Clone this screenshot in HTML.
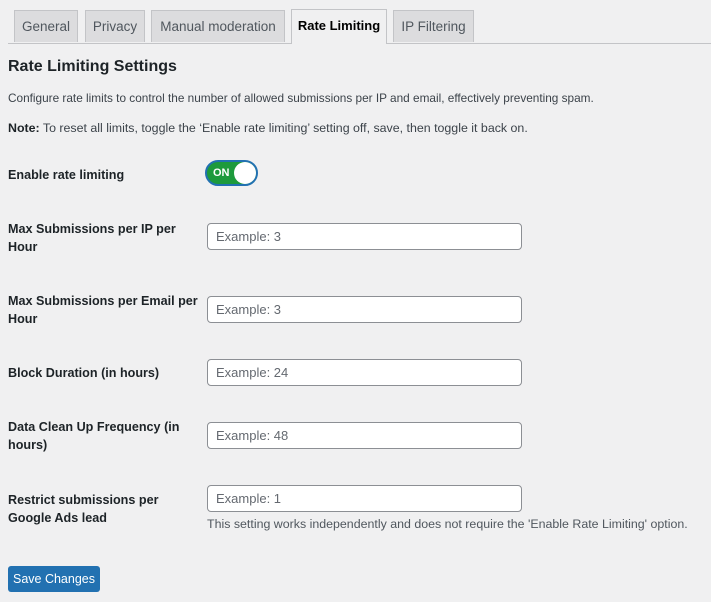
<!DOCTYPE html><html><head><style>
body{margin:0;background:#f0f0f1;font-family:"Liberation Sans",sans-serif;color:#1d2327;width:711px;height:602px;overflow:hidden;position:relative;font-size:13px}
.a{position:absolute}
.tab{position:absolute;top:10px;height:32px;border:1px solid #c3c4c7;border-bottom:none;background:#dcdcde;color:#50575e;font-size:13.5px;line-height:32px;text-align:center;box-sizing:border-box}
.tab.on{background:#f0f0f1;color:#000;top:9px;height:35px;font-weight:bold;font-size:13px}
.line{position:absolute;left:8px;right:0;top:43px;border-top:1px solid #c3c4c7}
.lab{position:absolute;left:8px;font-weight:bold;font-size:12.6px;line-height:18px;width:200px;white-space:nowrap}
.in{position:absolute;left:207px;width:315px;height:27px;box-sizing:border-box;border:1px solid #8c8f94;border-radius:4px;background:#fff;color:#646970;font-size:13px;line-height:25px;padding-left:8px}
</style></head><body>
<div class="line"></div>
<div class="tab" style="left:14px;width:64px">General</div>
<div class="tab" style="left:85px;width:60px">Privacy</div>
<div class="tab" style="left:151px;width:134px">Manual moderation</div>
<div class="tab on" style="left:291px;width:96px">Rate Limiting</div>
<div class="tab" style="left:393px;width:81px">IP Filtering</div>
<div class="a" style="left:8px;top:58px;font-size:16px;font-weight:bold">Rate Limiting Settings</div>
<div class="a" style="left:8px;top:91px;font-size:11.8px;color:#3c434a">Configure rate limits to control the number of allowed submissions per IP and email, effectively preventing spam.</div>
<div class="a" style="left:8px;top:121px;font-size:12.4px;color:#3c434a"><b style="color:#1d2327">Note:</b> To reset all limits, toggle the ‘Enable rate limiting’ setting off, save, then toggle it back on.</div>
<div class="lab" style="top:166px">Enable rate limiting</div>
<div class="a" style="left:205px;top:160px;width:53px;height:26px;border-radius:14px;background:#1d9a3c;box-sizing:border-box;border:2px solid #2271b1"></div>
<div class="a" style="left:213px;top:167px;color:#fff;font-weight:bold;font-size:11px">ON</div>
<div class="a" style="left:234px;top:162px;width:22px;height:22px;border-radius:50%;background:#fff"></div>
<div class="lab" style="top:220px">Max Submissions per IP per<br>Hour</div>
<div class="in" style="top:223px">Example: 3</div>
<div class="lab" style="top:292px">Max Submissions per Email per<br>Hour</div>
<div class="in" style="top:296px">Example: 3</div>
<div class="lab" style="top:364px">Block Duration (in hours)</div>
<div class="in" style="top:359px">Example: 24</div>
<div class="lab" style="top:418px">Data Clean Up Frequency (in<br>hours)</div>
<div class="in" style="top:422px">Example: 48</div>
<div class="lab" style="top:491px">Restrict submissions per<br>Google Ads lead</div>
<div class="in" style="top:485px">Example: 1</div>
<div class="a" style="left:207px;top:517px;color:#50575e;font-size:12.4px">This setting works independently and does not require the 'Enable Rate Limiting' option.</div>
<div class="a" style="left:8px;top:566px;width:92px;height:26px;background:#2271b1;border-radius:3px;color:#fff;font-size:12.5px;line-height:26px;text-align:center">Save Changes</div>
</body></html>
